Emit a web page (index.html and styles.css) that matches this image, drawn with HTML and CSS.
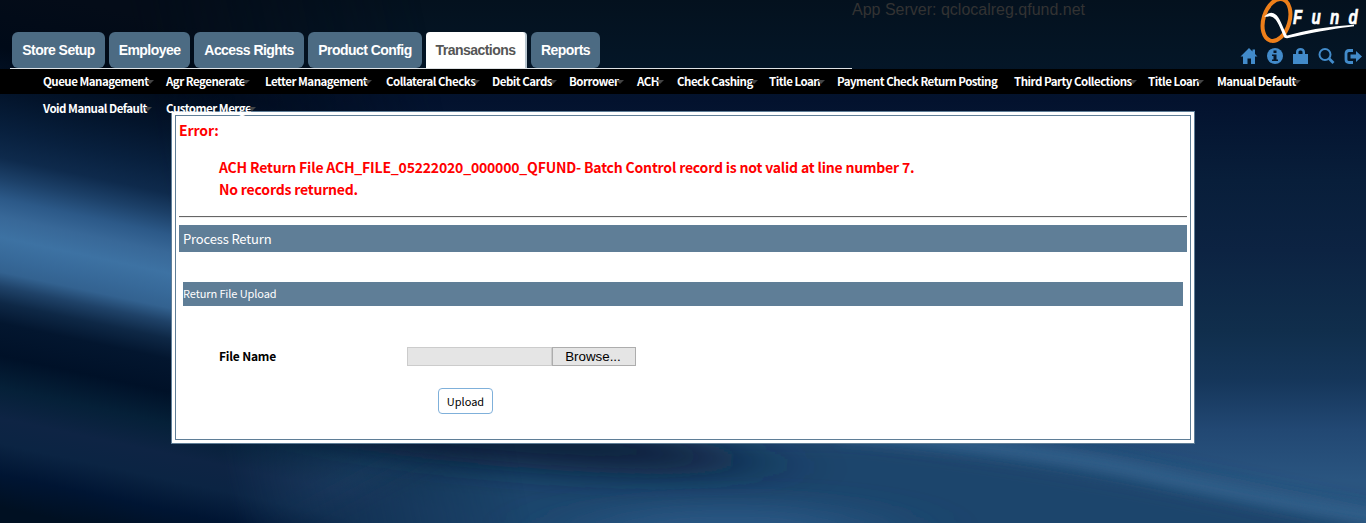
FILE: index.html
```html
<!DOCTYPE html>
<html lang="en">
<head>
<meta charset="utf-8">
<title>QFund - Process Return</title>
<link rel="stylesheet" href="styles.css">
</head>
<body>
<svg class="backdrop" width="1366" height="523" viewBox="0 0 1366 523">
  <defs>
    <filter id="soft" x="-20%" y="-50%" width="140%" height="200%"><feGaussianBlur stdDeviation="14"/></filter>
    <filter id="wide" x="-60%" y="-300%" width="220%" height="700%"><feGaussianBlur stdDeviation="50 14"/></filter>
    <filter id="glow" x="-10%" y="-50%" width="120%" height="200%"><feGaussianBlur stdDeviation="7"/></filter>
  </defs>
  <path d="M480 420L860 430Q1080 455 1390 525V570H200Z" fill="#1f446c" filter="url(#soft)"/>
  <ellipse cx="500" cy="440" rx="250" ry="26" transform="rotate(5 500 440)" fill="#0b223e" filter="url(#wide)"/>
  <ellipse cx="730" cy="530" rx="150" ry="24" fill="#2c5985" filter="url(#wide)"/>
  <path d="M840 432Q1050 450 1150 474T1420 524" fill="none" stroke="#346590" stroke-width="12" filter="url(#glow)"/>
</svg>
<div class="backdrop-left"></div>
<header class="header">
  <nav class="tabs">
    <a class="tab t1">Store Setup</a><a class="tab t2">Employee</a><a class="tab t3">Access Rights</a><a class="tab t4">Product Config</a><a class="tab t5 active">Transactions</a><a class="tab t6">Reports</a>
  </nav>
  <div class="server">App Server: qclocalreg.qfund.net</div>
  <div class="brand">
    <svg class="logo" width="104" height="43" viewBox="0 0 104 43">
      <ellipse cx="17.500" cy="20" rx="13" ry="21.500" transform="rotate(17 17.500 20)" fill="none" stroke="#ee7f1a" stroke-width="4"/>
      <path d="M7 16C12 11 17 14 20 20C24 28 25 32 27.500 36.500C47 31 69 27 95 25.500C70 28 49 33 28 37.500L26 37C21 27 18 13 8 16Z" fill="#fff" stroke="#fff" stroke-width="1.500"/>
      <text class="logo-text" x="0" y="0" transform="translate(34 23.500) scale(.72 1)" textLength="90" lengthAdjust="spacing">Fund</text>
    </svg>
    <div class="icons">
      <svg width="18" height="18" viewBox="0 0 18 18"><path d="M9 1L0.500 9.500H3V17H7.500V11.500H11V17H15V9.500H17.500L15 7V2.500H12.500V4.500Z"/></svg>
      <svg width="18" height="18" viewBox="0 0 18 18"><circle cx="9" cy="9" r="8"/><path class="cut" d="M7.500 3.500H10.500V6H7.500ZM6 7.500H10.500V12.500H12V14H6V12.500H7.500V9H6Z"/></svg>
      <svg width="18" height="18" viewBox="0 0 18 18"><path d="M1 7H4V5C4 2.500 6 1 8.500 1S13 2.500 13 5V7H16V17H1ZM6.500 7H10.500V5C10.500 3 6.500 3 6.500 5Z" fill-rule="evenodd"/></svg>
      <svg width="18" height="18" viewBox="0 0 18 18"><circle class="line" cx="7" cy="7.500" r="5.500"/><path class="line thick" d="M11 11.500L15.500 16"/></svg>
      <svg width="18" height="18" viewBox="0 0 18 18"><path class="line thick" d="M9 3.500H5Q2 3.500 2 6.500V12.500Q2 15.500 5 15.500H9"/><path d="M6.500 7.500H12V4L18 9.500L12 15V11.500H6.500Z"/></svg>
    </div>
  </div>
</header>
<nav class="menu">
  <div class="row">
    <a class="w123 drop">Queue Management</a><a class="w99 drop">Agr Regenerate</a><a class="w121 drop">Letter Management</a><a class="w106 drop">Collateral Checks</a><a class="w77 drop">Debit Cards</a><a class="w68 drop">Borrower</a><a class="w40 drop">ACH</a><a class="w92 drop">Check Cashing</a><a class="w68 drop">Title Loan</a><a class="w177">Payment Check Return Posting</a><a class="w134 drop">Third Party Collections</a><a class="w69 drop">Title Loan</a><a class="w97 drop">Manual Default</a>
  </div>
  <div class="row second">
    <a class="w123 drop">Void Manual Default</a><a class="w99 drop">Customer Merge</a>
  </div>
</nav>
<main class="panel">
  <div class="inner">
    <h2 class="error">Error:</h2>
    <div class="messages">
      <p>ACH Return File ACH_FILE_05222020_000000_QFUND- Batch Control record is not valid at line number 7.</p>
      <p>No records returned.</p>
    </div>
    <hr class="rule">
    <h1 class="title">Process Return</h1>
    <h3 class="subtitle">Return File Upload</h3>
    <form class="form">
      <div class="file-row">
        <label class="label">File Name</label>
        <span class="path"></span><button type="button" class="browse">Browse...</button>
      </div>
      <button type="button" class="upload">Upload</button>
    </form>
  </div>
</main>
</body>
</html>
```
FILE: styles.css
```css
* { box-sizing: border-box; }
html { height: 100%; }
body {
  margin: 0;
  height: 523px;
  overflow: hidden;
  position: relative;
  font-family: "Noto Sans CJK SC", sans-serif;
  background: linear-gradient(180deg, #04111e 0, #041627 65px, #03122e 100px, #081e3a 180px, #0c2342 250px, #102e4c 330px, #15365a 380px, #224873 430px, #2a5580 480px, #2a547f 523px);
}
.backdrop { position: absolute; inset: 0; }
.backdrop-left {
  position: absolute;
  inset: 0;
  background: linear-gradient(192deg, #040c18 0, #040c18 270px, #000a18 330px, #03142b 375px, #08203e 412px, #0e2a4c 438px, #1c4068 458px, #2c5988 478px, #386898 496px, #3d72a3 516px, #376999 536px, #336290 550px, #1f4268 564px, #0e2846 580px, #03162f 600px, #001128 632px, #052038 663px, #0e2444 693px, #0b2443 718px, #001533 748px, #001022 780px);
  -webkit-mask-image: linear-gradient(78deg, #000 230px, rgba(0,0,0,.55) 350px, transparent 520px);
  mask-image: linear-gradient(78deg, #000 230px, rgba(0,0,0,.55) 350px, transparent 520px);
}
.header { position: relative; display: flex; height: 69px; }
.tabs {
  display: flex;
  gap: 4px;
  width: 842px;
  margin-left: 10px;
  padding: 32px 0 0 2px;
  border-bottom: 1px solid #dde1e4;
}
.tab {
  height: 36px;
  border-radius: 6px;
  background: #4c6b83;
  color: #fff;
  font: bold 14px/37px "Liberation Sans", Arial, sans-serif;
  letter-spacing: -.55px;
  text-align: center;
  white-space: nowrap;
}
.t1 { width: 93px; }
.t2 { width: 81px; }
.t3 { width: 110px; }
.t4 { width: 114px; }
.t5 { width: 101px; }
.t6 { width: 69px; }
.tab.active {
  background: #fff;
  color: #555;
  border-right: 2px solid #b8c6d0;
  border-radius: 4px 4px 0 0;
}
.server {
  flex: 1;
  color: #333;
  font: 16px/19px "Liberation Sans", Arial, sans-serif;
}
.brand { width: 128px; }
.logo { display: block; margin-left: 21px; }
.logo-text {
  fill: #fff;
  stroke: #fff;
  stroke-width: .7px;
  font: italic bold 21px "Liberation Sans", Arial, sans-serif;
}
.icons { display: flex; gap: 8px; margin: 4px 0 0 2px; }
.icons svg { flex: none; fill: #428bca; }
.icons .cut { fill: #071728; }
.icons .line { fill: none; stroke: #428bca; stroke-width: 2; }
.icons .thick { stroke-width: 2.800; }
.menu { position: relative; z-index: 2; height: 43px; }
.row {
  display: flex;
  height: 25px;
  padding-left: 43px;
  background: #000;
  color: #fff;
  font-size: 11.5px;
  font-weight: bold;
  letter-spacing: -.5px;
  line-height: 25px;
  white-space: nowrap;
}
.second { margin-top: 2px; background: none; }
.drop::after {
  content: "";
  display: inline-block;
  margin-left: -3px;
  vertical-align: 2px;
  border: 4px solid transparent;
  border-top-color: #444;
  border-bottom: 0;
}
.w123 { width: 123px; }
.w99 { width: 99px; }
.w121 { width: 121px; }
.w106 { width: 106px; }
.w77 { width: 77px; }
.w68 { width: 68px; }
.w40 { width: 40px; }
.w92 { width: 92px; }
.w177 { width: 177px; }
.w134 { width: 134px; }
.w69 { width: 69px; }
.w97 { width: 97px; }
.panel {
  position: relative;
  width: 1024px;
  height: 333px;
  margin: -1px 0 0 171px;
  padding: 3px;
  border: 1px solid #5f7e97;
  background: #fff;
}
.inner { height: 100%; padding: 0 3px; border: 1px solid #5f7e97; }
.error {
  margin: 4px 0 0;
  color: #f00;
  font-size: 14px;
  letter-spacing: -.1px;
  line-height: 20px;
}
.messages {
  margin: 16px 0 0 40px;
  color: #f00;
  font-size: 14px;
  font-weight: bold;
  letter-spacing: -.19px;
  line-height: 22px;
}
.messages p { margin: 0; white-space: nowrap; }
.rule { margin: 16px 0 7px; border: 0; border-top: 1px solid #666; border-bottom: 1px solid #eee; }
.title {
  height: 27px;
  margin: 0;
  padding-left: 4px;
  background: #5f7e97;
  color: #fff;
  font-size: 13px;
  font-weight: normal;
  letter-spacing: -.15px;
  line-height: 27px;
}
.subtitle {
  height: 24px;
  margin: 30px 4px 0;
  background: #5f7e97;
  color: #fff;
  font-size: 11px;
  font-weight: normal;
  letter-spacing: -.1px;
  line-height: 23px;
}
.file-row { display: flex; margin: 41px 0 0 40px; height: 19px; }
.label { width: 188px; font-size: 12px; font-weight: bold; letter-spacing: -.2px; line-height: 18px; }
.path { width: 145px; border: 1px solid #ccc; background: #e5e5e5; }
.browse {
  width: 84px;
  padding: 0 2px 0 0;
  border: 1px solid #adadad;
  background: #e5e5e5;
  color: #000;
  font: 13.333px/16px "Liberation Sans", Arial, sans-serif;
}
.upload {
  display: block;
  width: 55px;
  height: 26px;
  margin: 22px 0 0 259px;
  padding: 0 0 1px;
  border: 1px solid #7fb0da;
  border-radius: 4px;
  background: #fff;
  color: #000;
  font: 11px/22px "Noto Sans CJK SC", sans-serif;
}
```
